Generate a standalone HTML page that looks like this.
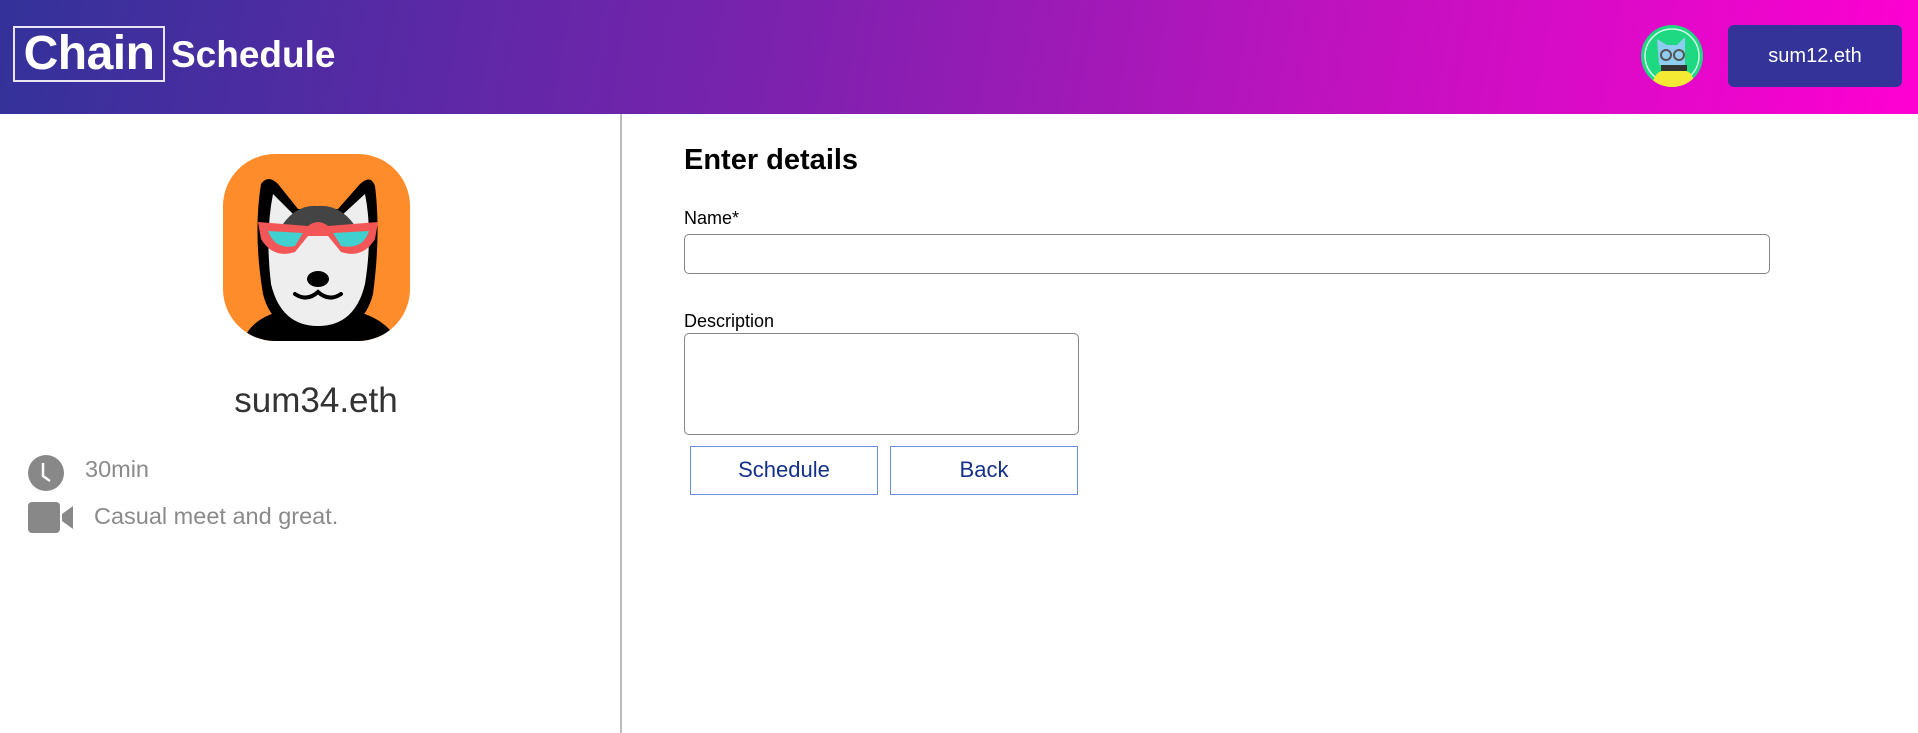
<!DOCTYPE html>
<html><head><meta charset="utf-8"><style>
*{box-sizing:border-box;margin:0;padding:0}
body{width:1918px;height:733px;overflow:hidden;background:#fff;font-family:"Liberation Sans",sans-serif;position:relative}
.hdr{position:absolute;left:0;top:0;width:1918px;height:114px;background:linear-gradient(100deg,#33329a 0%,#7a22ae 40%,#c012bf 70%,#ff00d2 100%)}
.logo{position:absolute;left:13px;top:26px;width:152px;height:56px;border:2px solid #e8e4f4;color:#fff;font:bold 48px "Liberation Sans",sans-serif;line-height:52px;text-align:center;letter-spacing:-0.5px}
.sched{position:absolute;left:171px;top:34px;color:#fff;font:bold 37px "Liberation Sans",sans-serif}
.av{position:absolute;left:1641px;top:25px;width:62px;height:62px;border-radius:50%;overflow:hidden;background:#1ed882}
.ubtn{position:absolute;left:1728px;top:25px;width:174px;height:62px;background:#333399;border-radius:6px;color:#fff;font-size:20px;text-align:center;line-height:62px}
.div{position:absolute;left:620px;top:114px;width:2px;height:619px;background:#bbb}
.dog{position:absolute;left:223px;top:154px;width:187px;height:187px;border-radius:52px;overflow:hidden;background:#ff8c2a}
.nm{position:absolute;left:0;width:632px;top:381px;text-align:center;font:35px "Liberation Sans",sans-serif;color:#333}
.g{position:absolute;color:#8a8a8a;font:23.5px "Liberation Sans",sans-serif}
h2{position:absolute;left:684px;top:144px;font:bold 29px "Liberation Sans",sans-serif;color:#000}
.lb{position:absolute;left:684px;font:18px "Liberation Sans",sans-serif;color:#000}
.in{position:absolute;border:1.5px solid #858585;border-radius:5px}
.b{position:absolute;top:446px;width:188px;height:49px;border:1.5px solid #6a8fe0;color:#14308a;font-size:22px;text-align:center;line-height:46px}
</style></head><body>
<div class="hdr">
<div class="logo">Chain</div>
<div class="sched">Schedule</div>
<div class="av"><svg width="62" height="62" viewBox="0 0 62 62">
<circle cx="31" cy="31" r="27" fill="none" stroke="#fff" stroke-width="1.5" opacity=".8"/>
<path d="M18 40 L16 14 L26 20 L36 20 L44 12 L44 40 Z" fill="#8fcdf0"/>
<circle cx="25" cy="30" r="5" fill="none" stroke="#555" stroke-width="2"/><circle cx="38" cy="30" r="5" fill="none" stroke="#555" stroke-width="2"/>
<rect x="20" y="40" width="26" height="6" fill="#333"/>
<path d="M10 62 Q14 46 22 46 L44 46 Q52 46 54 62Z" fill="#f4ea33"/></svg></div>
<div class="ubtn">sum12.eth</div>
</div>
<div class="div"></div>
<div class="dog"><svg width="187" height="187" viewBox="0 0 187 187">
<path d="M20 187 Q30 160 70 155 L120 155 Q160 160 175 187Z" fill="#000"/>
<path d="M40 140 Q30 80 38 30 Q45 20 55 30 L75 55 L115 55 L137 30 Q148 20 152 32 Q158 80 150 140 Q140 180 95 180 Q50 180 40 140Z" fill="#000"/>
<path d="M48 130 Q42 80 50 40 L72 62 L118 62 L142 40 Q150 80 142 130 Q132 172 95 172 Q58 172 48 130Z" fill="#eee"/>
<path d="M55 78 Q70 50 95 52 Q120 50 136 78 L110 85 L95 70 L80 85Z" fill="#444"/>
<path d="M35 68 L85 72 Q95 64 105 72 L155 68 L152 85 Q140 105 118 98 L105 82 L85 82 L72 98 Q50 105 38 85Z" fill="#f35656"/>
<path d="M45 77 L80 79 L72 92 Q52 96 45 77Z M110 79 L146 77 Q140 96 118 92Z" fill="#3fd0cf"/>
<ellipse cx="95" cy="125" rx="11" ry="8" fill="#000"/>
<path d="M72 140 Q84 148 95 138 Q106 148 118 140" fill="none" stroke="#000" stroke-width="4" stroke-linecap="round"/>
</svg></div>
<div class="nm">sum34.eth</div>
<svg style="position:absolute;left:28px;top:455px" width="36" height="36" viewBox="0 0 36 36"><circle cx="18" cy="18" r="18" fill="#888"/><path d="M15 8 V21 L22 26" fill="none" stroke="#fff" stroke-width="2.5"/></svg>
<div class="g" style="left:85px;top:456px">30min</div>
<svg style="position:absolute;left:28px;top:502px" width="46" height="31" viewBox="0 0 46 31"><rect x="0" y="0" width="32" height="31" rx="4" fill="#888"/><path d="M34 12 L45 4 V27 L34 19Z" fill="#888"/></svg>
<div class="g" style="left:94px;top:503px">Casual meet and great.</div>
<h2>Enter details</h2>
<div class="lb" style="top:208px">Name*</div>
<div class="in" style="left:684px;top:234px;width:1086px;height:40px"></div>
<div class="lb" style="top:311px">Description</div>
<div class="in" style="left:684px;top:333px;width:395px;height:102px"></div>
<div class="b" style="left:690px">Schedule</div>
<div class="b" style="left:890px">Back</div>
</body></html>
